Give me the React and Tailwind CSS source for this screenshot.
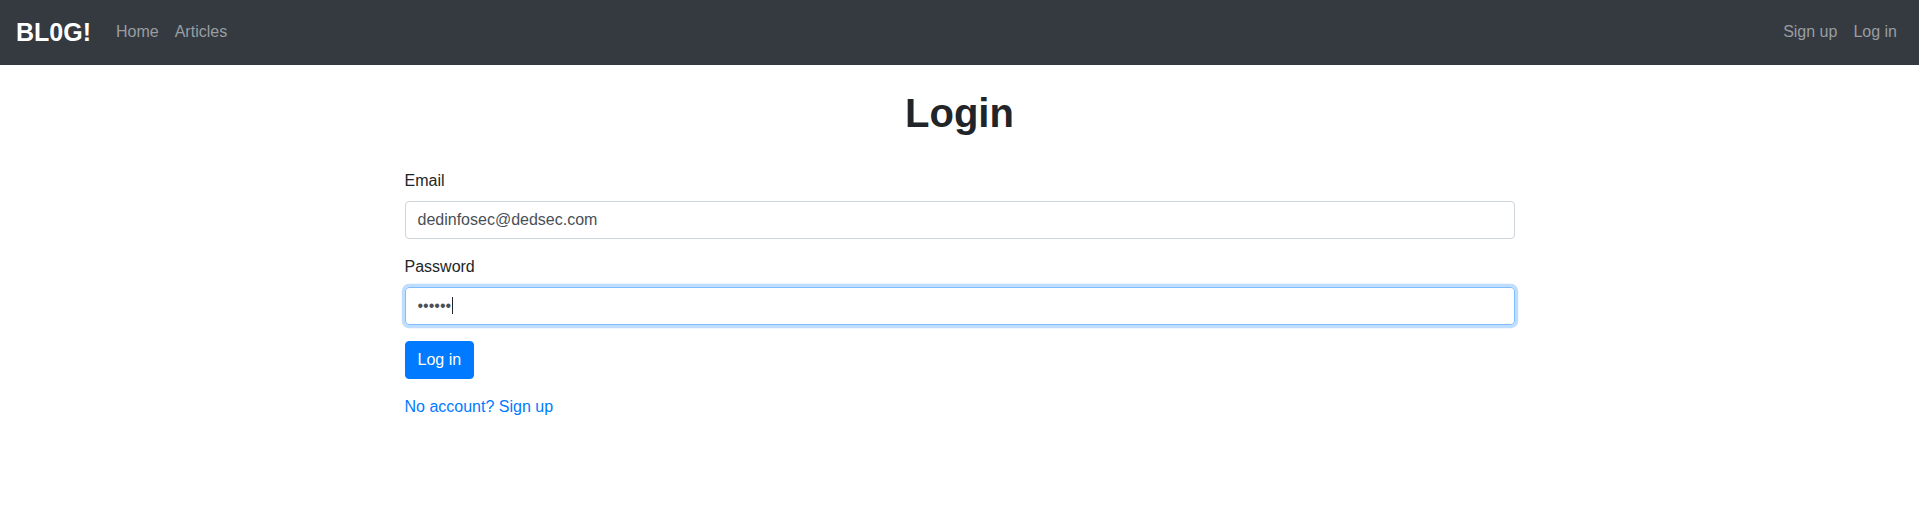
export default function App() {
  return (
    <div className="min-h-screen bg-white font-['Liberation_Sans',Arial,sans-serif] text-base text-[#212529]">
      {/* Navbar */}
      <nav className="flex h-[65px] items-center bg-[#343a40] pl-4 pr-[14px]">
        <a href="#" className="mr-[17px] text-[25px] font-bold leading-[1.5] text-white">
          BL0G!
        </a>
        <div className="flex pb-0.5">
          <a href="#" className="px-2 leading-6 text-[#9a9da0]">Home</a>
          <a href="#" className="px-2 leading-6 text-[#9a9da0]">Articles</a>
        </div>
        <div className="ml-auto flex pb-0.5">
          <a href="#" className="px-2 leading-6 text-[#9a9da0]">Sign up</a>
          <a href="#" className="px-2 leading-6 text-[#9a9da0]">Log in</a>
        </div>
      </nav>

      {/* Body */}
      <main className="mx-auto max-w-[1140px] px-[15px] pt-6">
        <h1 className="mb-8 text-center text-[40px] font-bold leading-[1.2]">Login</h1>

        <form onSubmit={(e) => e.preventDefault()}>
          <div className="mb-4">
            <label className="mb-2 block leading-6">Email</label>
            <input
              type="email"
              defaultValue="dedinfosec@dedsec.com"
              className="block h-[38px] w-full rounded border border-[#ced4da] px-3 leading-6 text-[#495057] outline-none"
            />
          </div>

          <div className="mb-4">
            <label className="mb-2 block leading-6">Password</label>
            <div className="relative">
              <input
                type="password"
                defaultValue="dedsec"
                className="block h-[38px] w-full rounded border border-[#80bdff] px-3 leading-6 text-[#495057] shadow-[0_0_0_3.2px_rgba(0,123,255,0.25)] outline-none"
              />
              {/* caret */}
              <span className="absolute left-[47px] top-[10px] h-[17px] w-px bg-[#212529]"></span>
            </div>
          </div>

          <button
            type="submit"
            className="rounded border border-[#007bff] bg-[#007bff] px-3 py-1.5 leading-6 text-white"
          >
            Log in
          </button>

          <p className="mt-4">
            <a href="#" className="leading-6 text-[#007bff]">No account? Sign up</a>
          </p>
        </form>
      </main>
    </div>
  );
}
